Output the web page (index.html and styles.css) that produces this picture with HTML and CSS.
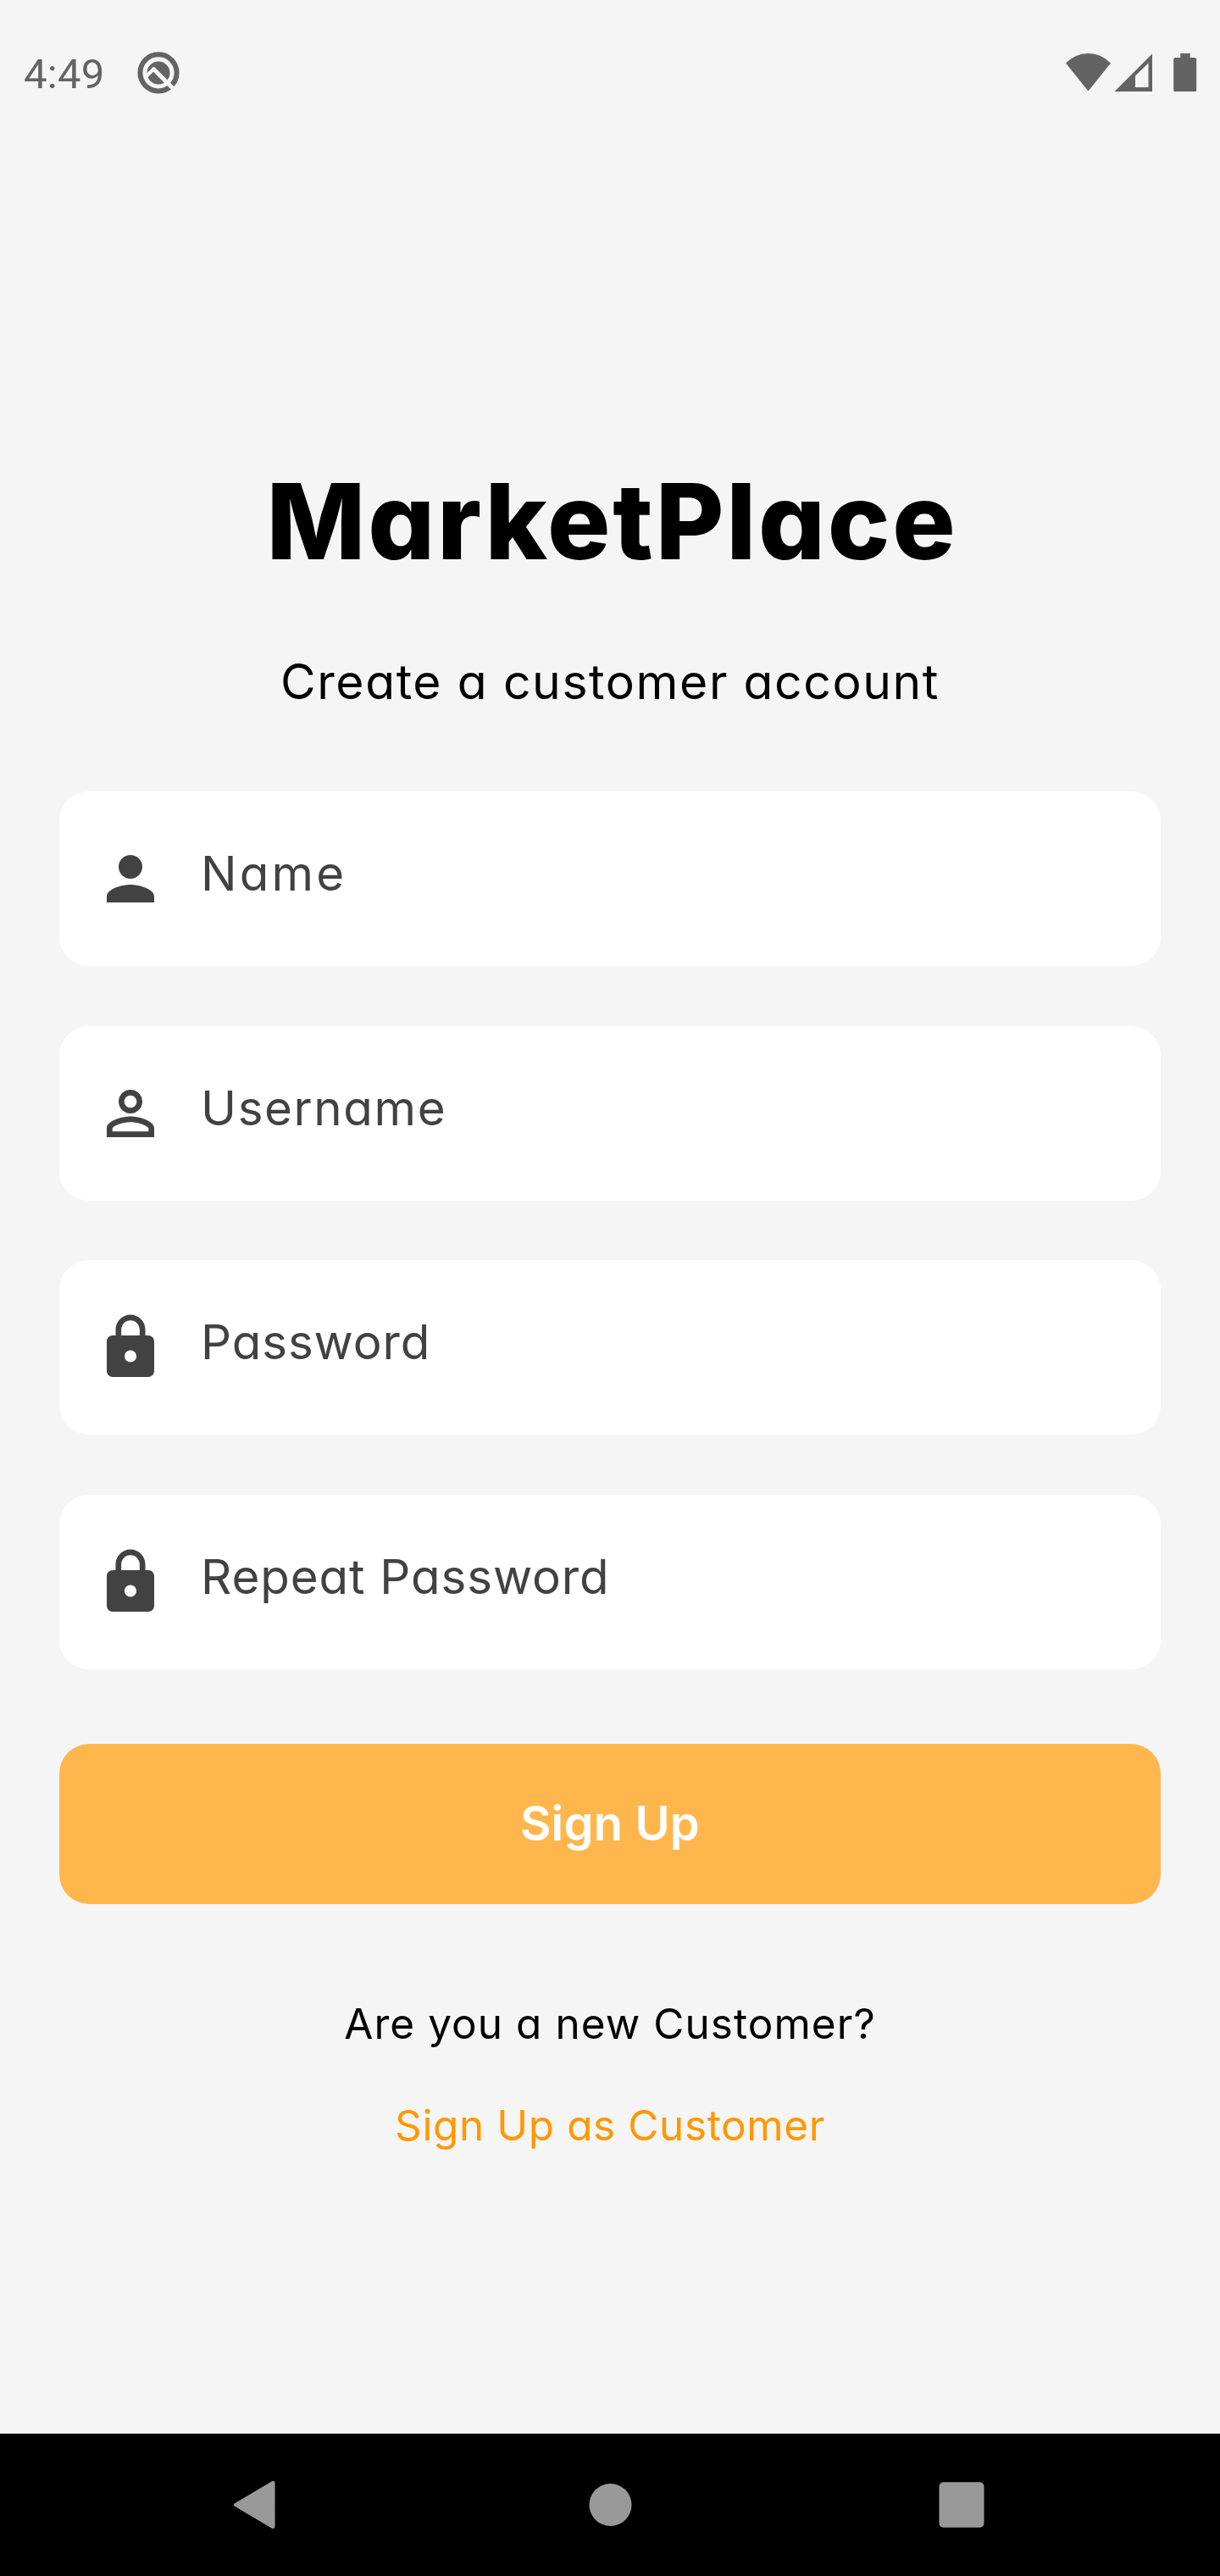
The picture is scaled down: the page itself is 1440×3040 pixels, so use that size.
FILE: index.html
```html
<!DOCTYPE html>
<html lang="en">
<head>
<meta charset="utf-8">
<title>MarketPlace</title>
<link rel="stylesheet" href="styles.css">
</head>
<body>
<div class="screen">
  <header class="status">
    <span class="clock">4:49</span>
    <svg class="q-icon" width="50" height="52" viewBox="0 0 50 52">
      <circle cx="25" cy="25.800" r="21.600" fill="none" stroke="#636363" stroke-width="6"/>
      <circle cx="25" cy="26" r="13.500" fill="#636363"/>
      <path d="M18.500 20.800L44 46.300" stroke="#f5f5f5" stroke-width="5"/>
      <path d="M10 30.800L20.500 20.300" stroke="#f5f5f5" stroke-width="4.200"/>
    </svg>
    <svg class="system" width="156" height="48" viewBox="0 0 156 48">
      <g fill="#636363">
        <path d="M0 14.500Q11.500 3 26.500 3T53 14.500L26.500 47.500Z"/>
        <path fill-rule="evenodd" d="M57.500 48L102 3.500V48ZM82 29.500V43H97.500V14.500Z"/>
        <path d="M135.300 3h11.400v5h5a2.500 2.500 0 0 1 2.500 2.500V46a2.500 2.500 0 0 1-2.500 2.500h-22A2.500 2.500 0 0 1 127.200 46V10.500A2.500 2.500 0 0 1 129.700 8h5.600z"/>
      </g>
    </svg>
  </header>

  <main class="content">
    <h1 class="title">MarketPlace</h1>
    <p class="subtitle">Create a customer account</p>
    <form class="form">
      <label class="field">
        <svg class="icon" viewBox="0 0 24 24"><path d="M12 12c2.210 0 4-1.790 4-4s-1.790-4-4-4-4 1.790-4 4 1.790 4 4 4zm0 2c-2.670 0-8 1.340-8 4v2h16v-2c0-2.660-5.330-4-8-4z"/></svg>
        <span class="label label-name">Name</span>
      </label>
      <label class="field">
        <svg class="icon" viewBox="0 0 24 24"><path d="M12 5.900c1.160 0 2.100.940 2.100 2.100s-.940 2.100-2.100 2.100S9.900 9.160 9.900 8s.940-2.100 2.100-2.100m0 9c2.970 0 6.100 1.460 6.100 2.100v1.100H5.900V17c0-.640 3.130-2.100 6.100-2.100M12 4C9.790 4 8 5.790 8 8s1.790 4 4 4 4-1.790 4-4-1.790-4-4-4zm0 9c-2.670 0-8 1.340-8 4v3h16v-3c0-2.660-5.330-4-8-4z"/></svg>
        <span class="label label-username">Username</span>
      </label>
      <label class="field">
        <svg class="icon" viewBox="0 0 24 24"><path d="M18 8h-1V6c0-2.760-2.240-5-5-5S7 3.240 7 6v2H6c-1.100 0-2 .900-2 2v10c0 1.100.900 2 2 2h12c1.100 0 2-.900 2-2V10c0-1.100-.900-2-2-2zm-6 9c-1.100 0-2-.900-2-2s.900-2 2-2 2 .900 2 2-.900 2-2 2zm3.100-9H8.900V6c0-1.710 1.390-3.100 3.100-3.100 1.710 0 3.100 1.390 3.100 3.100v2z"/></svg>
        <span class="label">Password</span>
      </label>
      <label class="field">
        <svg class="icon" viewBox="0 0 24 24"><path d="M18 8h-1V6c0-2.760-2.240-5-5-5S7 3.240 7 6v2H6c-1.100 0-2 .900-2 2v10c0 1.100.900 2 2 2h12c1.100 0 2-.900 2-2V10c0-1.100-.900-2-2-2zm-6 9c-1.100 0-2-.900-2-2s.900-2 2-2 2 .900 2 2-.900 2-2 2zm3.100-9H8.900V6c0-1.710 1.390-3.100 3.100-3.100 1.710 0 3.100 1.390 3.100 3.100v2z"/></svg>
        <span class="label">Repeat Password</span>
      </label>
      <button class="submit" type="button">Sign Up</button>
    </form>
    <p class="prompt">Are you a new Customer?</p>
    <a class="link">Sign Up as Customer</a>
  </main>

  <nav class="navbar">
    <svg class="nav-icon" viewBox="0 0 60 60"><path d="M7 28.200L50.500 2.500Q54 .700 54.500 4V56Q54 59.300 50.500 57.500L7 31.800Q4.500 30 7 28.200Z"/></svg>
    <svg class="nav-icon" viewBox="0 0 60 60"><circle cx="32.500" cy="30" r="25"/></svg>
    <svg class="nav-icon" viewBox="0 0 60 60"><rect x="3.500" y="3.200" width="53" height="53.500" rx="5"/></svg>
  </nav>
</div>
</body>
</html>
```
FILE: styles.css
```css
* { box-sizing: border-box; margin: 0; }

body {
  background: #f5f5f5;
  color: #000;
  font-family: Inter, sans-serif;
  font-feature-settings: "cv11";
}

.screen {
  display: flex;
  flex-direction: column;
  width: 1440px;
  height: 3040px;
}

.status {
  display: flex;
  align-items: flex-start;
  padding: 60px 26px 0 28px;
  height: 168px;
}

.clock {
  width: 134px;
  color: #636363;
  font: 49px/56px Roboto, sans-serif;
  letter-spacing: 0.300px;
}

.system { margin-left: auto; }

.content {
  display: flex;
  flex: 1;
  flex-direction: column;
  align-items: center;
  padding: 367px 70px 0;
}

.title {
  padding-left: 5px;
  font-size: 124px;
  font-weight: 800;
  line-height: 160px;
  letter-spacing: 2.700px;
}

.subtitle {
  margin-top: 69px;
  font-size: 57px;
  line-height: 82px;
  letter-spacing: 1.600px;
}

.form {
  display: flex;
  flex-direction: column;
  gap: 70.500px;
  width: 100%;
  margin-top: 88px;
}

.field {
  display: flex;
  align-items: center;
  gap: 41px;
  height: 206px;
  padding: 0 42px;
  border-radius: 35px;
  background: #fff;
  color: #424242;
}

.icon {
  width: 84px;
  height: 84px;
  fill: #424242;
}

.label {
  padding-bottom: 12px;
  font-size: 56.500px;
  line-height: 80px;
  letter-spacing: 0.900px;
}

.label-name { letter-spacing: 3.200px; }
.label-username { letter-spacing: 1.600px; }

.submit {
  height: 189px;
  margin-top: 17.500px;
  padding: 0;
  border: 0;
  border-radius: 35px;
  background: #ffb74d;
  color: #fff;
  font: 600 56px/80px Inter, sans-serif;
  font-feature-settings: "cv11";
  letter-spacing: 0.200px;
}

.prompt {
  margin-top: 105px;
  font-size: 49.500px;
  line-height: 72px;
  letter-spacing: 1.050px;
}

.link {
  margin-top: 48px;
  color: #ff9800;
  font-size: 49.500px;
  line-height: 72px;
  letter-spacing: 0.600px;
}

.navbar {
  display: flex;
  align-items: center;
  justify-content: space-between;
  height: 168px;
  padding: 0 275px 0 270px;
  background: #000;
}

.nav-icon {
  width: 60px;
  height: 60px;
  fill: #999;
}
```
